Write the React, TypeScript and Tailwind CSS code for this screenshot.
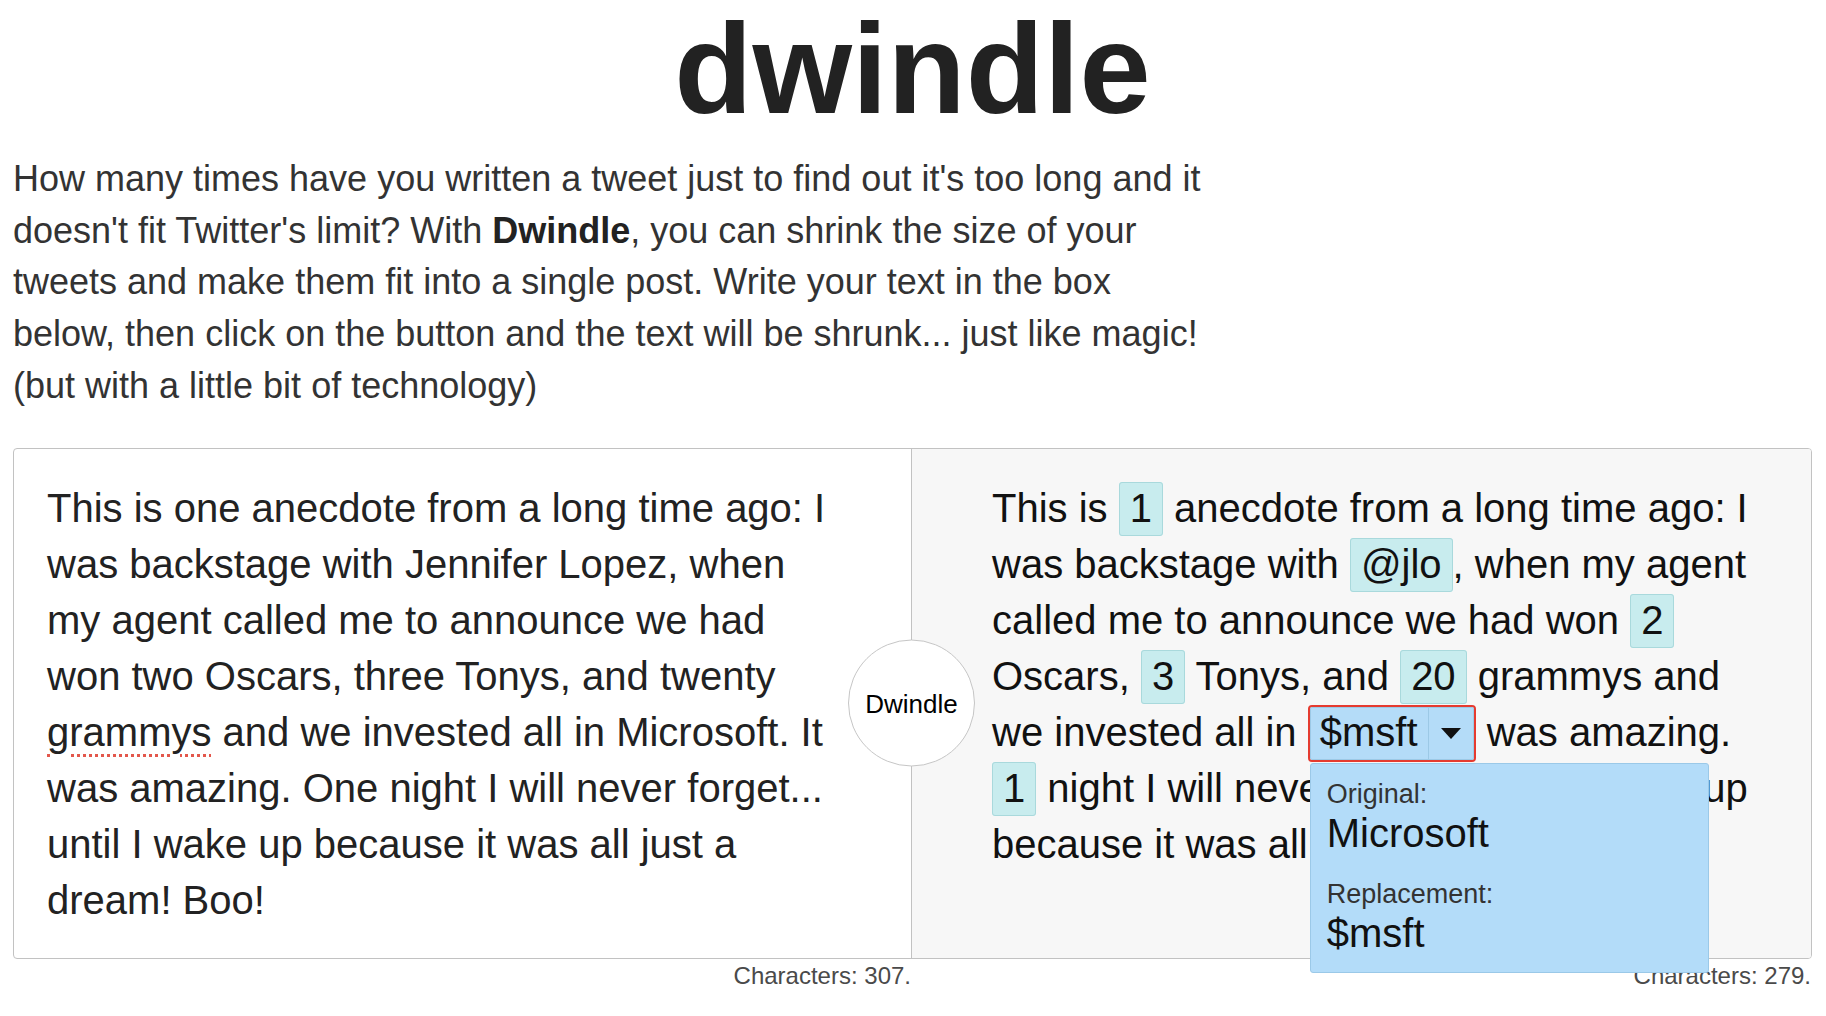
import React from "react";

function Chip({ children }: { children: React.ReactNode }) {
  return (
    <span className="whitespace-nowrap rounded-[3px] border border-[#a9d9dc] bg-[#c8ecee] px-[10px] pt-[3px] pb-[5px]">
      {children}
    </span>
  );
}

function DropChip() {
  return (
    <span className="relative -mb-[2px] inline-flex rounded-[4px] border-2 border-[#e53b30] align-baseline">
      <span className="flex rounded-[2px] border border-[#9cc9e6] bg-[#b4dcf8]">
        <span className="h-[51px] border-r border-[#9cc9e6] pl-[9px] pr-[10px] leading-[49px]">$msft</span>
        <span className="flex h-[51px] w-[44px] items-center justify-center">
          <svg width="20" height="11" viewBox="0 0 20 11">
            <path d="M0 0H20L10 11Z" fill="#111" />
          </svg>
        </span>
      </span>
      <span className="absolute left-0 top-full z-10 mt-[3px] block h-[210px] w-[399px] rounded-[3px] border border-[#9bc9e8] bg-[#b3dcf9] pt-[11px] pl-[16px]">
        <span className="block text-[27px] leading-[38px] text-[#333]">Original:</span>
        <span className="block text-[40px] leading-[40px] text-[#111]">Microsoft</span>
        <span className="mt-[22px] block text-[27px] leading-[38px] text-[#333]">Replacement:</span>
        <span className="block text-[40px] leading-[40px] text-[#111]">$msft</span>
      </span>
    </span>
  );
}

export default function App() {
  return (
    <div className="min-h-screen bg-white pl-[13px] pr-[14px] font-['Liberation_Sans',Arial,sans-serif] text-[#222]">
      <h1 className="pt-[5px] text-center text-[128px] font-bold leading-none text-[#222]">dwindle</h1>
      <p className="mt-[20px] w-[1196px] text-[36px] leading-[51.7px] text-[#333]">
        How many times have you written a tweet just to find out it's too long and it doesn't fit Twitter's limit? With{" "}
        <b className="font-bold text-[#222]">Dwindle</b>, you can shrink the size of your tweets and make them fit into a single post. Write your
        text in the box below, then click on the button and the text will be shrunk... just like magic! (but with a little bit of technology)
      </p>

      <div className="relative mt-[36px] flex rounded-[4px] border border-[#c2c2c2]">
        <div className="w-[898px] shrink-0 border-r border-[#c2c2c2] pt-[31px] pb-[30px] pl-[33px] pr-[74px] text-[40px] leading-[56px] text-[#222]">
          This is one anecdote from a long time ago: I was backstage with Jennifer Lopez, when my agent called me to announce we had won two
          Oscars, three Tonys, and twenty{" "}
          <span className="underline decoration-[#e3574c] decoration-dotted decoration-[3px] underline-offset-[8px]">grammys</span> and we
          invested all in Microsoft. It was amazing. One night I will never forget... until I wake up because it was all just a dream! Boo!
        </div>
        <div className="flex-1 rounded-r-[3px] bg-[#f7f7f7] pt-[31px] pb-[30px] pl-[80px] pr-[39px] text-[40px] leading-[56px] text-[#111]">
          This is <Chip>1</Chip> anecdote from a long time ago: I was backstage with <Chip>@jlo</Chip>, when my agent called me to announce we
          had won <Chip>2</Chip> Oscars, <Chip>3</Chip> Tonys, and <Chip>20</Chip> grammys and we invested all in <DropChip /> was amazing.{" "}
          <Chip>1</Chip> night I will never forget... until I wake up because it was all just a dream! Boo!
        </div>
        <button className="absolute left-[834px] top-1/2 flex h-[127px] w-[127px] -translate-y-1/2 items-center justify-center rounded-full border-[1.5px] border-[#c6c6c6] bg-white pt-[2px] text-[26px] text-black">
          Dwindle
        </button>
      </div>

      <div className="flex text-[24px] leading-[34px] text-[#4a4a4a]">
        <div className="w-[898px] text-right">Characters: 307.</div>
        <div className="flex-1 pr-[1px] text-right">Characters: 279.</div>
      </div>
    </div>
  );
}
